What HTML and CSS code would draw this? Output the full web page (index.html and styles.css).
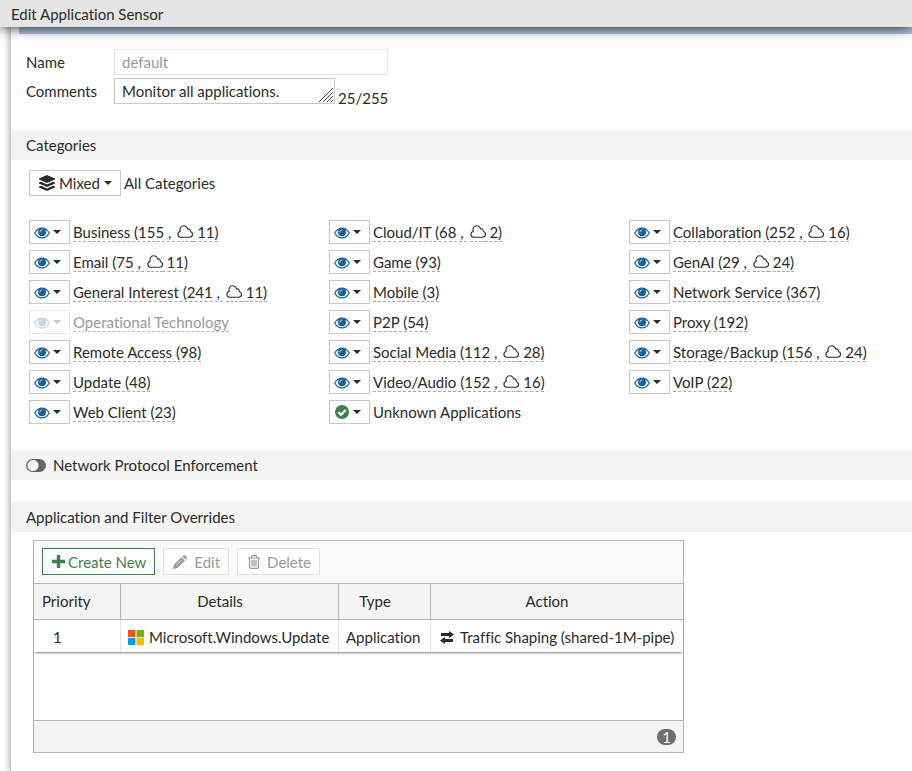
FILE: index.html
```html
<!DOCTYPE html>
<html lang="en">
<head>
<meta charset="utf-8">
<title>Edit Application Sensor</title>
<link rel="stylesheet" href="styles.css">
</head>
<body>
<svg class="sprite" aria-hidden="true">
  <symbol id="eye" viewBox="0 0 16 12">
    <path fill="none" stroke="currentColor" stroke-width="1.2" d="M.7 6C2.4 3 5 1.100 8 1.100S13.600 3 15.300 6C13.600 9 11 10.900 8 10.900S2.400 9 .7 6z"/>
    <circle cx="8" cy="5.300" r="4" fill="currentColor"/>
    <path fill="none" stroke="#fff" stroke-width=".7" stroke-linecap="round" d="M5.800 5.100A2.100 2.100 0 0 1 7.900 3"/>
  </symbol>
  <symbol id="check" viewBox="0 0 14 14">
    <circle cx="7" cy="7" r="7" fill="currentColor"/>
    <path fill="none" stroke="#fff" stroke-width="2.200" d="M3.300 7.200l2.700 2.600 4.800-4.900"/>
  </symbol>
  <symbol id="cloud" viewBox="0 0 16 13">
    <path fill="none" stroke="currentColor" stroke-width="1.100" stroke-linejoin="round" d="M3.400 12.200A2.900 2.900 0 0 1 3.200 6.500C2.300 3.300 4 .8 6.600.8c2 0 3.500 1.300 3.900 3.200 1.700-.5 3 .6 2.800 2.500 1.400.3 2.200 1.400 2.200 2.800 0 1.700-1.200 2.900-2.900 2.900z"/>
  </symbol>
  <symbol id="layers" viewBox="0 0 16 16">
    <path fill="currentColor" d="M8 0l8 3.600v.8L8 8 0 4.400v-.8zM0 7.600l2-.9 6 2.700 6-2.700 2 .9v.8L8 12 0 8.400zM0 11.600l2-.9 6 2.700 6-2.700 2 .9v.8L8 16l-8-3.600z"/>
  </symbol>
  <symbol id="plus" viewBox="0 0 13 13">
    <path fill="currentColor" d="M4.800 0h3.400v4.800H13v3.400H8.200V13H4.800V8.200H0V4.800h4.800z"/>
  </symbol>
  <symbol id="pencil" viewBox="0 0 14 14">
    <path fill="currentColor" d="M0 14l1-4.400 7.600-7.500 3.400 3.300L4.400 13zM9.400 1.400L10.400.4a1.200 1.200 0 0 1 1.700 0l1.500 1.500a1.200 1.200 0 0 1 0 1.700l-.9.9z"/>
    <path stroke="#fafafa" stroke-width=".7" d="M3 10.500l6-6"/>
  </symbol>
  <symbol id="trash" viewBox="0 0 12 14">
    <path fill="none" stroke="currentColor" stroke-width="1.200" d="M0 3h12M3.500 3V1.400Q3.500.7 4.200.7h3.600q.7 0 .7.700V3M1.500 3v9q0 1.300 1.200 1.300h6.600q1.200 0 1.200-1.300V3M4 5v6.500M6 5v6.500M8 5v6.500"/>
  </symbol>
  <symbol id="shaping" viewBox="0 0 14 13">
    <path fill="currentColor" d="M1 2h8V0l5 3.500L9 7V5H1zM13 8H5V6L0 9.500 5 13v-2h8z"/>
  </symbol>
  <symbol id="windows" viewBox="0 0 16 15">
    <path fill="#f05022" d="M0 0h7.500v7H0z"/><path fill="#6abd00" d="M8.500 0H16v7H8.500z"/>
    <path fill="#009fe0" d="M0 8h7.500v7H0z"/><path fill="#ffb800" d="M8.500 8H16v7H8.500z"/>
    <path fill="#dcb" opacity=".6" d="M7.500 0h1v15h-1zM0 7h16v1H0z"/>
  </symbol>
</svg>

<header class="titlebar"><h1>Edit Application Sensor</h1></header>

<main class="panel">
  <div class="accent"></div>
  <form class="fields">
    <div class="field">
      <label for="name">Name</label>
      <input class="text name" id="name" type="text" value="default" disabled>
    </div>
    <div class="field">
      <label for="comments">Comments</label>
      <div class="comments">
        <textarea class="text" id="comments" rows="1">Monitor all applications.</textarea>
        <svg class="grip" viewBox="0 0 14 14" aria-hidden="true"><path d="M0 14L14 0M4 14L14 4M8 14l6-6M12 14l2-2"/></svg>
      </div>
      <span class="counter">25/255</span>
    </div>
  </form>

  <h2 class="section">Categories</h2>
  <div class="all">
    <button class="menu wide" type="button" aria-haspopup="true"><svg class="i-layers"><use href="#layers"/></svg>Mixed<i class="caret"></i></button>
    <span>All Categories</span>
  </div>
  <ul class="categories" id="categories"></ul>

  <div class="section">
    <input class="switch" type="checkbox" role="switch" id="npe"><label for="npe">Network Protocol Enforcement</label>
  </div>

  <h2 class="section overrides-title">Application and Filter Overrides</h2>
  <section class="overrides">
    <div class="toolbar">
      <button class="tool create" type="button"><svg class="i-plus"><use href="#plus"/></svg>Create New</button>
      <button class="tool" type="button" disabled><svg class="i-pencil"><use href="#pencil"/></svg>Edit</button>
      <button class="tool" type="button" disabled><svg class="i-trash"><use href="#trash"/></svg>Delete</button>
    </div>
    <div class="rows">
      <table>
        <thead><tr><th class="priority">Priority</th><th class="details">Details</th><th class="type">Type</th><th class="action">Action</th></tr></thead>
        <tbody><tr>
          <td class="number">1</td>
          <td><span class="cell"><svg class="i-windows"><use href="#windows"/></svg>Microsoft.Windows.Update</span></td>
          <td>Application</td>
          <td><span class="cell shape"><svg class="i-shaping"><use href="#shaping"/></svg>Traffic Shaping (shared-1M-pipe)</span></td>
        </tr></tbody>
      </table>
    </div>
    <footer class="foot"><span class="badge">1</span></footer>
  </section>
</main>
<script src="app.js"></script>
</body>
</html>
```
FILE: styles.css
```css
* { box-sizing: border-box; }

body {
  margin: 0;
  min-height: 100vh;
  display: flex;
  flex-direction: column;
  background: #fff;
  color: #2b2b2b;
  font: 15px/20px Lato, "Liberation Sans", sans-serif;
  font-variant-ligatures: no-common-ligatures;
}

button, input, textarea { font: inherit; color: inherit; font-variant-ligatures: inherit; }
h1, h2 { margin: 0; font: inherit; font-variant-ligatures: inherit; }
svg { flex: none; }
.sprite { display: none; }

.titlebar {
  position: relative;
  z-index: 1;
  height: 27px;
  padding: 4px 11px;
  background: #e5e5e5;
  box-shadow: 0 0 14px rgba(0, 0, 0, .9);
}

.panel {
  flex: 1;
  margin-left: 10px;
  border-left: 1px solid #c8c8c8;
  box-shadow: -1px 0 6px rgba(0, 0, 0, .3);
}

.accent { height: 7px; margin-left: 8px; background: #afc4de; }

.fields {
  display: grid;
  gap: 3px;
  padding: 15px 15px 26px;
}
.field { display: flex; }
.field label { width: 88px; padding-top: 3px; }
.text {
  display: block;
  height: 26px;
  padding: 2px 7px;
  border: 1px solid #c8c8c8;
  border-radius: 0;
  background: #fff;
}
.field .name { width: 274px; }
.name:disabled { border-color: #e3e3e3; color: #999; }
.comments { position: relative; width: 221px; margin-right: 3px; }
.comments .text { width: 100%; resize: none; overflow: hidden; }
.grip {
  position: absolute;
  right: 2px;
  bottom: 2px;
  width: 14px;
  height: 14px;
  fill: none;
  stroke: #555;
}
.counter { height: 26px; padding-top: 10px; }

.section {
  display: flex;
  align-items: center;
  height: 30px;
  padding: 0 15px;
  background: #f4f4f4;
}

.menu {
  display: inline-flex;
  align-items: center;
  gap: 3px;
  width: 41px;
  height: 24px;
  padding: 0 4px;
  border: 1px solid #c8c8c8;
  background: #fff;
}
.menu.wide { gap: 4px; width: 92px; height: 26px; padding: 0 8px 0 9px; }
.caret {
  border: 4px solid transparent;
  border-top-color: #2b2b2b;
  border-bottom: 0;
}
.all { display: flex; align-items: center; gap: 3px; padding: 10px 18px 24px; }
.i-layers { width: 16px; height: 16px; }

.categories {
  display: grid;
  grid-template-columns: 300px 300px 1fr;
  grid-auto-rows: 24px;
  gap: 6px 0;
  margin: 0;
  padding: 0 0 26px 18px;
  list-style: none;
}
.categories li { display: flex; align-items: center; gap: 3px; white-space: nowrap; }
.i-eye { width: 16px; height: 14px; padding-top: 2px; color: #1a6098; }
.i-check { width: 14px; height: 14px; margin: 0 1px; color: #3f7f4f; }
.name-link {
  text-decoration: underline dashed #aaa 1px;
  text-underline-offset: 3px;
}
.i-cloud {
  width: 16px;
  height: 17px;
  margin-left: 2px;
  padding-bottom: 3px;
  border-bottom: 1px dashed #aaa;
  vertical-align: -4px;
}
.off .menu { opacity: .25; border-color: #aaa; }
.off .name-link { color: #999; text-decoration-color: #bbb; }

.switch {
  appearance: none;
  width: 20px;
  height: 13px;
  margin: 0 7px 0 0;
  border-radius: 7px;
  background: radial-gradient(circle at 7px 50%, #f4f4f4 5px, #666 6px);
}
.overrides-title { margin-top: 22px; }

.overrides {
  width: fit-content;
  margin: 8px 22px 18px;
  border: 1px solid #b4b4b4;
}
.toolbar { display: flex; gap: 8px; padding: 7px 8px 8px; background: #fafafa; }
.tool {
  display: flex;
  align-items: center;
  height: 27px;
  padding: 0 8px 0 9px;
  border: 1px solid #e0e0e0;
  background: #fff;
  color: #999;
}
.tool.create { padding-right: 7px; border-color: #3f7f4f; color: #3f7f4f; }
.tool.create { padding-right: 8px; }
.i-plus { width: 13px; height: 13px; margin-right: 3px; }
.i-pencil { width: 14px; height: 14px; margin-right: 7px; }
.i-trash { width: 12px; height: 14px; margin: 0 7px 0 1px; }

.rows { min-height: 137px; }
table { border-collapse: separate; border-spacing: 0; }
th, td { padding: 0 7px; text-align: left; font-weight: 400; white-space: nowrap; }
th {
  height: 37px;
  padding-bottom: 1px;
  border: solid #b4b4b4;
  border-width: 1px 1px 1px 0;
  background: #f4f4f4;
  text-align: center;
}
td { height: 32px; padding-top: 2px; border-right: 1px solid #e3e3e3; }
th:last-child, td:last-child { border-right: 0; }
table { box-shadow: 0 2px 2px -1px rgba(0, 0, 0, .5); }
th.priority { width: 87px; padding-left: 8px; text-align: left; }
.details { width: 218px; }
.type { width: 92px; }
.action { width: 252px; }
th.details, th.type { padding-right: 26px; }
th.action { padding-right: 27px; }
.number { padding-left: 19px; }
.cell { display: flex; align-items: center; gap: 5px; }
.shape { gap: 6px; padding-left: 2px; }
.i-windows { width: 16px; height: 15px; }
.i-shaping { width: 14px; height: 13px; }
.foot {
  display: flex;
  align-items: center;
  justify-content: flex-end;
  height: 32px;
  padding: 0 7px;
  border-top: 1px solid #b4b4b4;
  background: #f4f4f4;
}
.badge {
  width: 19px;
  border-radius: 8px;
  background: #6e6e6e;
  color: #fff;
  line-height: 16px;
  text-align: center;
}
```
FILE: app.js
```js
// [name, application count, cloud application count]
const categories = [
  ["Business", 155, 11], ["Cloud/IT", 68, 2], ["Collaboration", 252, 16],
  ["Email", 75, 11], ["Game", 93], ["GenAI", 29, 24],
  ["General Interest", 241, 11], ["Mobile", 3], ["Network Service", 367],
  ["Operational Technology"], ["P2P", 54], ["Proxy", 192],
  ["Remote Access", 98], ["Social Media", 112, 28], ["Storage/Backup", 156, 24],
  ["Update", 48], ["Video/Audio", 152, 16], ["VoIP", 22],
  ["Web Client", 23], ["Unknown Applications"]
];

document.getElementById("categories").innerHTML = categories.map(([name, apps, cloud]) => {
  const unknown = name === "Unknown Applications";
  const off = name === "Operational Technology";
  const icon = unknown ? "check" : "eye";
  const cloudPart = cloud ? ` , <svg class="i-cloud"><use href="#cloud"/></svg> ${cloud}` : "";
  const count = apps ? ` (${apps}${cloudPart})` : "";
  return `<li class="${off ? "off" : ""}">
    <button class="menu" type="button" aria-haspopup="true" aria-label="${name} action"${off ? " disabled" : ""}><svg class="i-${icon}"><use href="#${icon}"/></svg><i class="caret"></i></button>
    <span class="${unknown ? "" : "name-link"}">${name}${count}</span></li>`;
}).join("");
```
